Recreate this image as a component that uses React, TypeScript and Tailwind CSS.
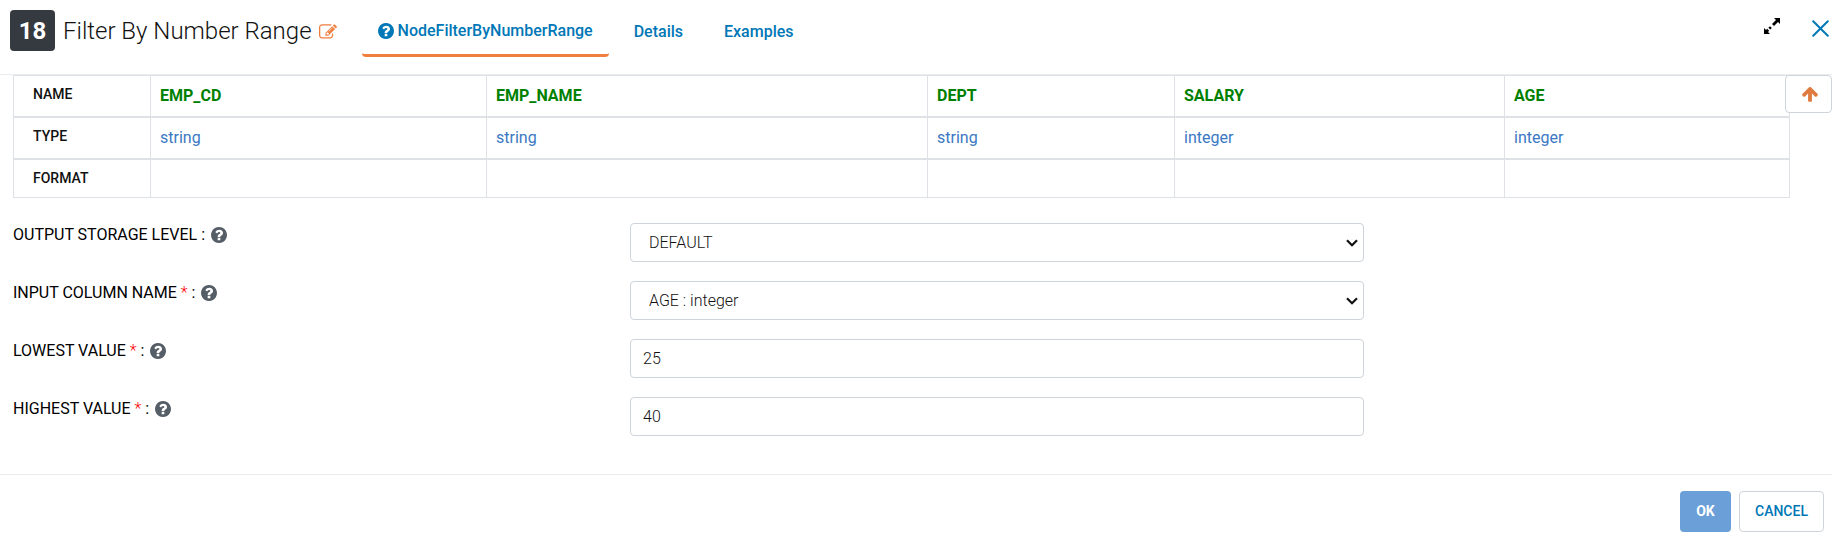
import type { ReactNode } from "react";

function QuestionIcon({ className }: { className: string }) {
  return (
    <svg viewBox="128 128 1536 1536" fill="currentColor" aria-hidden="true" className={className}>
      <path d="M1024 1376v-192q0-14-9-23t-23-9h-192q-14 0-23 9t-9 23v192q0 14 9 23t23 9h192q14 0 23-9t9-23zm256-672q0-88-55.5-163t-138.5-116-170-41q-243 0-371 213-15 24 8 42l132 100q7 6 19 6 16 0 25-12 53-68 86-92 34-24 86-24 48 0 85.5 26t37.5 59q0 38-20 61t-68 45q-63 28-115.5 86.5t-52.5 125.5v36q0 14 9 23t23 9h192q14 0 23-9t9-23q0-19 21.5-49.5t54.5-49.5q32-18 49-28.5t46-35 44.5-48 28-60.5 12.5-81zm384 192q0 209-103 385.5t-279.5 279.5-385.5 103-385.5-103-279.5-279.5-103-385.5 103-385.5 279.5-279.5 385.5-103 385.5 103 279.5 279.5 103 385.5z" />
    </svg>
  );
}

function EditIcon() {
  return (
    <svg viewBox="0 0 1792 1792" fill="currentColor" aria-hidden="true" className="size-[18px]">
      <path d="M888 1184l116-116-152-152-116 116v56h96v96h56zm440-720q-16-16-33 1l-350 350q-17 17-1 33t33-1l350-350q17-17 1-33zm80 594v190q0 119-84.5 203.5t-203.5 84.5h-832q-119 0-203.5-84.5t-84.5-203.5v-832q0-119 84.5-203.5t203.5-84.5h832q63 0 117 25 15 7 18 23 3 17-9 29l-49 49q-14 14-32 8-23-6-45-6h-832q-66 0-113 47t-47 113v832q0 66 47 113t113 47h832q66 0 113-47t47-113v-126q0-13 9-22l64-64q15-15 35-7t20 29zm-96-738l288 288-672 672h-288v-288zm444 132l-92 92-288-288 92-92q28-28 68-28t68 28l152 152q28 28 28 68t-28 68z" />
    </svg>
  );
}

function ArrowUpIcon() {
  return (
    <svg viewBox="0 0 1792 1792" fill="currentColor" aria-hidden="true" className="size-[18px]">
      <path d="M1675 971q0 51-37 90l-75 75q-38 38-91 38-54 0-90-38l-294-293v704q0 52-37.5 84.5t-90.5 32.5h-128q-53 0-90.5-32.5t-37.5-84.5v-704l-294 293q-36 38-90 38t-90-38l-75-75q-38-38-38-90 0-53 38-91l651-651q35-37 90-37 54 0 91 37l651 651q37 39 37 91z" />
    </svg>
  );
}

function ExpandIcon() {
  return (
    <svg viewBox="0 0 16 16" fill="currentColor" aria-hidden="true" className="size-4">
      <path d="M10 0h6v6l-2-2-4 4-2-2 4-4zM0 16v-6l2 2 1.200-1.200 2 2L4 14l2 2zM6 8.200l1.800 1.800-1.600 1.600-1.800-1.800z" />
    </svg>
  );
}

function CloseIcon() {
  return (
    <svg viewBox="0 0 17 17" fill="none" stroke="currentColor" strokeWidth="2" strokeLinecap="round" aria-hidden="true" className="size-[17px]">
      <path d="M1.200 1.200l14.600 14.600M15.800 1.200L1.200 15.800" />
    </svg>
  );
}

const columns = [
  { name: "EMP_CD", type: "string", width: "w-[336px]" },
  { name: "EMP_NAME", type: "string", width: "w-[441px]" },
  { name: "DEPT", type: "string", width: "w-[247px]" },
  { name: "SALARY", type: "integer", width: "w-[330px]" },
  { name: "AGE", type: "integer", width: "w-[285px]" },
];

const headCell = "border-r border-[#dee2e6] pl-[19px] text-left text-[14px] font-medium text-[#111]";

function SchemaTable() {
  return (
    <table className="w-[97%] table-fixed border-separate border-spacing-0 border-t border-l border-[#dee2e6]">
      <thead>
        <tr className="h-[42px]">
          <th scope="row" className={`${headCell} w-[137px] border-b-2 pb-1`}>NAME</th>
          {columns.map((c) => (
            <th key={c.name} scope="col" className={`${c.width} border-r border-b-2 border-[#dee2e6] pl-[9px] text-left text-[16px] font-bold text-[#008000]`}>
              {c.name}
            </th>
          ))}
        </tr>
      </thead>
      <tbody>
        <tr className="h-[42px]">
          <th scope="row" className={`${headCell} border-b-2 pb-1`}>TYPE</th>
          {columns.map((c) => (
            <td key={c.name} className="border-r border-b-2 border-[#dee2e6] pl-[9px] text-[16px] text-[#3a78c3]">
              {c.type}
            </td>
          ))}
        </tr>
        <tr className="h-[38px]">
          <th scope="row" className={`${headCell} border-b`}>FORMAT</th>
          {columns.map((c) => (
            <td key={c.name} className="border-r border-b border-[#dee2e6]" />
          ))}
        </tr>
      </tbody>
    </table>
  );
}

function Field({ id, label, required, children }: { id: string; label: string; required?: boolean; children: ReactNode }) {
  return (
    <div className="grid grid-cols-[617fr_734fr_468fr]">
      <div className="flex h-6 items-center gap-[6px] text-[16px] text-black">
        <label htmlFor={id}>
          {label} {required && <span className="font-light text-[#f00]">* </span>}:
        </label>
        <QuestionIcon className="size-4 text-[#555d66]" />
      </div>
      {children}
    </div>
  );
}

const control = "block h-[39px] w-full rounded border border-[#ced4da] bg-white text-[16px] font-light text-[#111]";

function SelectBox({ id, value }: { id: string; value: string }) {
  return (
    <div className="relative">
      <select id={id} className={`${control} appearance-none px-[18px]`}>
        <option>{value}</option>
      </select>
      <svg viewBox="0 0 12 8" fill="none" stroke="#111" strokeWidth="2.200" aria-hidden="true" className="pointer-events-none absolute top-4 right-[6px] h-2 w-3">
        <path d="M1 1.200l5 5 5-5" />
      </svg>
    </div>
  );
}

export default function App() {
  return (
    <div className="bg-white font-[Roboto,sans-serif] text-[#212529]">
      <header className="flex h-[75px] items-start border-b border-[#e9ecef] pl-[10px]">
        <span className="mt-[10px] flex h-[41px] w-[45px] items-center justify-center rounded bg-[#343a40] text-[24px] font-bold text-white">18</span>
        <h1 className="mt-[10px] ml-2 flex h-[41px] items-center text-[24px] font-light text-[#111]">Filter By Number Range</h1>
        <button type="button" aria-label="Edit name" className="mt-[23px] ml-[7px] text-[#ee7f41]">
          <EditIcon />
        </button>
        <nav className="ml-[25px] flex h-[57px] items-stretch text-[16px] font-medium text-[#0077b6]">
          <a href="#node" className="flex items-center gap-1 rounded border-b-3 border-[#f07f3f] px-4 pt-2">
            <QuestionIcon className="size-4" />
            NodeFilterByNumberRange
          </a>
          <a href="#details" className="flex items-center px-[25px] pt-[6px]">Details</a>
          <a href="#examples" className="flex items-center px-4 pt-[6px]">Examples</a>
        </nav>
        <div className="ml-auto flex gap-8 pr-[3px]">
          <button type="button" aria-label="Expand" className="mt-[18px] self-start text-black">
            <ExpandIcon />
          </button>
          <button type="button" aria-label="Close" className="mt-5 self-start text-[#0077b6]">
            <CloseIcon />
          </button>
        </div>
      </header>

      <main className="relative pl-[13px]">
        <SchemaTable />
        <button type="button" aria-label="Scroll to top" className="absolute top-0 right-0 flex h-[38px] w-[47px] items-center justify-center rounded border border-[#ced4da] bg-white pl-[2px] text-[#e07b3f]">
          <ArrowUpIcon />
        </button>

        <form className="flex flex-col gap-[19px] pt-[25px] pb-[38px]">
          <Field id="storage" label="OUTPUT STORAGE LEVEL">
            <SelectBox id="storage" value="DEFAULT" />
          </Field>
          <Field id="column" label="INPUT COLUMN NAME" required>
            <SelectBox id="column" value="AGE : integer" />
          </Field>
          <Field id="lowest" label="LOWEST VALUE" required>
            <input id="lowest" type="text" defaultValue="25" className={`${control} px-3`} />
          </Field>
          <Field id="highest" label="HIGHEST VALUE" required>
            <input id="highest" type="text" defaultValue="40" className={`${control} px-3`} />
          </Field>
        </form>
      </main>

      <footer className="flex justify-end gap-2 border-t border-[#e9ecef] px-2 pt-4 pb-1">
        <button type="button" className="h-[41px] w-[51px] rounded bg-[#6a9fd8] text-[14px] font-bold text-white">OK</button>
        <button type="button" className="h-[41px] w-[85px] rounded border border-[#ced4da] bg-white text-[14px] font-medium text-[#0077b6]">CANCEL</button>
      </footer>
    </div>
  );
}
